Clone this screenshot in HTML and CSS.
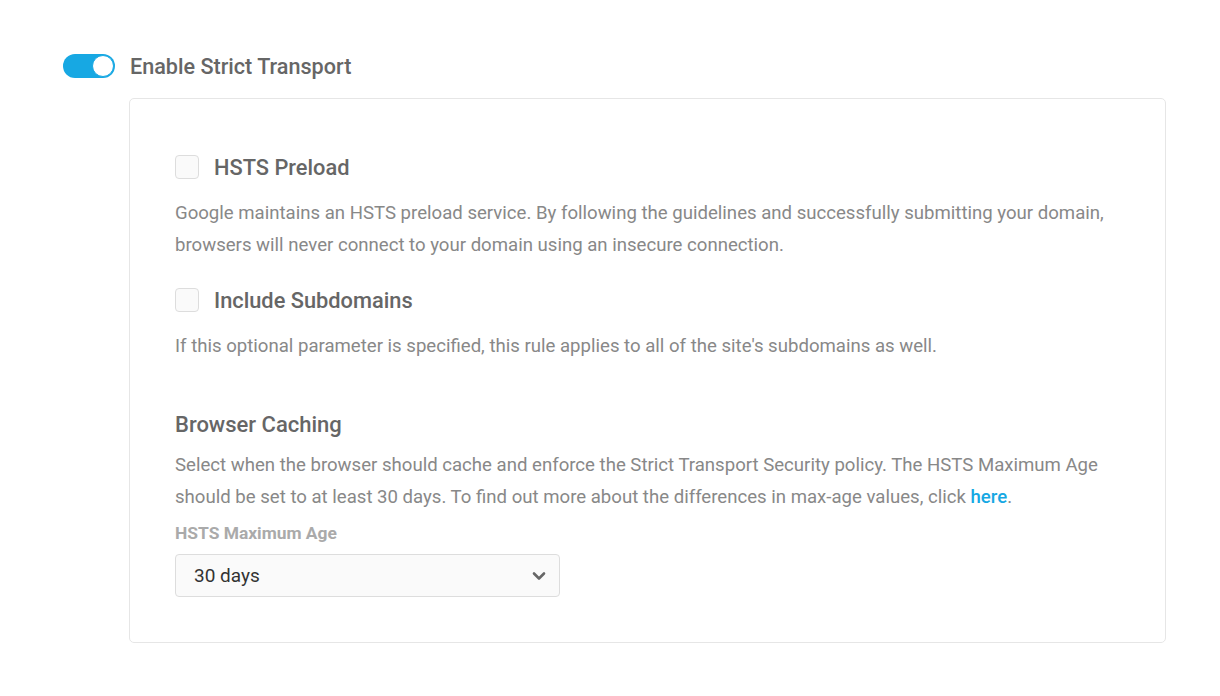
FILE: index.html
```html
<!DOCTYPE html>
<html>
<head>
<meta charset="utf-8">
<link rel="stylesheet" href="styles.css">
</head>
<body>
<div class="page">
  <div class="header">
    <span class="toggle"><span class="knob"></span></span>
    <span class="title">Enable Strict Transport</span>
  </div>
  <div class="card">
    <div class="check-row">
      <span class="checkbox"></span>
      <span class="check-label">HSTS Preload</span>
    </div>
    <p class="desc desc-first">Google maintains an HSTS preload service. By following the guidelines and successfully submitting your domain, browsers will never connect to your domain using an insecure connection.</p>
    <div class="check-row check-row-second">
      <span class="checkbox"></span>
      <span class="check-label">Include Subdomains</span>
    </div>
    <p class="desc desc-first">If this optional parameter is specified, this rule applies to all of the site's subdomains as well.</p>
    <h3 class="section-title">Browser Caching</h3>
    <p class="desc desc-section">Select when the browser should cache and enforce the Strict Transport Security policy. The HSTS Maximum Age should be set to at least 30 days. To find out more about the differences in max-age values, click <a class="link" href="#">here</a>.</p>
    <div class="field-label">HSTS Maximum Age</div>
    <div class="select">
      <span class="select-value">30 days</span>
      <svg class="chevron" width="14" height="10" viewBox="0 0 14 10"><path d="M2 2.5 L7 7.5 L12 2.5" fill="none" stroke="#666" stroke-width="2.6" stroke-linecap="round" stroke-linejoin="round"/></svg>
    </div>
  </div>
</div>
</body>
</html>
```

FILE: styles.css
```css
* { box-sizing: border-box; }
body {
  margin: 0;
  background: #fff;
  font-family: Roboto, "Liberation Sans", sans-serif;
}
.page {
  padding: 54px 54px 0 63px;
}
.header {
  display: flex;
  align-items: center;
  height: 24px;
}
.toggle {
  width: 52px;
  height: 24px;
  border-radius: 12px;
  background: #17a8e3;
  display: flex;
  align-items: center;
  justify-content: flex-end;
  padding: 1px;
}
.knob {
  width: 22px;
  height: 22px;
  border-radius: 50%;
  background: #fff;
  border: 1px solid #17a8e3;
}
.title {
  margin-left: 15px;
  font-size: 21.6px;
  font-weight: 500;
  color: #666;
}
.card {
  margin: 20px 0 0 66px;
  border: 1px solid #e6e6e6;
  border-radius: 5px;
  padding: 56px 45px 45px 45px;
}
.check-row {
  display: flex;
  align-items: center;
  height: 24px;
}
.check-row-second { margin-top: 27px; }
.checkbox {
  width: 24px;
  height: 24px;
  border: 1px solid #ddd;
  border-radius: 4px;
  background: #fafafa;
}
.check-label {
  margin-left: 15px;
  font-size: 21.8px;
  font-weight: 500;
  color: #666;
}
.desc {
  margin: 0;
  font-size: 18.6px;
  line-height: 32px;
  color: #888;
}
.desc-first { margin-top: 18px; }
.section-title {
  margin: 47px 0 0;
  font-size: 22px;
  line-height: 32px;
  font-weight: 500;
  color: #666;
}
.desc-section { margin-top: 8px; }
.link {
  color: #17a8e3;
  text-decoration: none;
  font-weight: 500;
}
.field-label {
  margin-top: 8px;
  font-size: 17.4px;
  line-height: 24px;
  font-weight: 700;
  color: #aaa;
}
.select {
  margin-top: 9px;
  width: 385px;
  height: 43px;
  border: 1px solid #ddd;
  border-radius: 4px;
  background: #fafafa;
  display: flex;
  align-items: center;
  justify-content: space-between;
  padding: 0 13px 0 18px;
}
.select-value {
  font-size: 19px;
  color: #333;
}
```
